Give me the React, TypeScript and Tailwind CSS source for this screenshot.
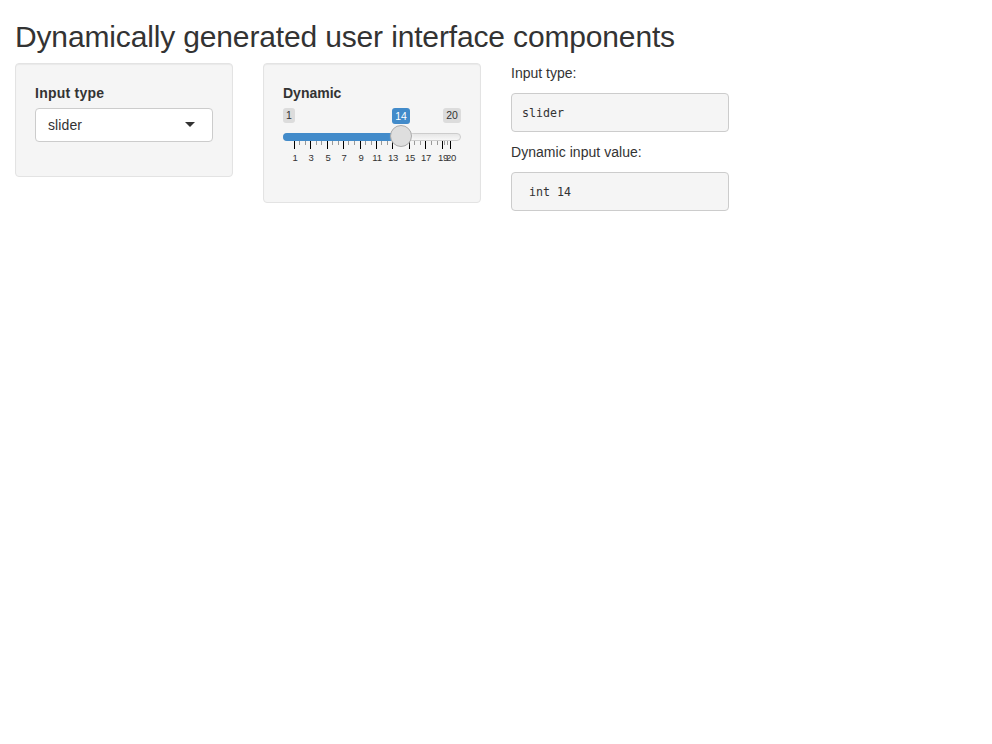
import React from "react";

// Tick offsets are in pixels from the left end of the slider track.
const majorTicks = [
  { x: 11, label: "1" },
  { x: 27, label: "3" },
  { x: 44, label: "5" },
  { x: 60, label: "7" },
  { x: 77, label: "9" },
  { x: 93, label: "11" },
  { x: 109, label: "13" },
  { x: 126, label: "15" },
  { x: 142, label: "17" },
  { x: 159, label: "19" },
  { x: 167, label: "20" },
];

const minorTicks = [16, 22, 33, 38, 49, 55, 65, 71, 82, 88, 98, 104, 115, 120, 131, 137, 148, 154, 161, 164];

function Well({ children, height }: { children: React.ReactNode; height: string }) {
  return (
    <div
      className={`w-[218px] rounded-[4px] border border-[#e3e3e3] bg-[#f5f5f5] p-[19px] shadow-[inset_0_1px_1px_rgba(0,0,0,0.05)] ${height}`}
    >
      {children}
    </div>
  );
}

function Slider() {
  return (
    <div className="relative mt-[5px] h-[60px] w-[178px] text-[#333]">
      <div className="flex justify-between text-[10.5px] leading-[15px]">
        <span className="w-3 rounded-[3px] bg-black/10 text-center">1</span>
        <span className="w-[18px] rounded-[3px] bg-black/10 text-center">20</span>
      </div>
      <span className="absolute left-[109px] top-0 w-[18px] rounded-[3px] bg-[#428bca] text-center text-[10.5px] leading-4 text-white">
        14
      </span>
      <div className="mt-[10px] h-2 overflow-hidden rounded-[8px] border border-[#ccc] bg-gradient-to-b from-[#e6e6e6] to-[#f7f7f7]" />
      <div className="absolute left-0 top-[25px] h-2 w-[118px] rounded-l-[8px] bg-[#428bca]" />
      {minorTicks.map((x) => (
        <i key={x} className="absolute top-[33px] h-1 w-px bg-[#999]" style={{ left: x }} />
      ))}
      {majorTicks.map(({ x, label }) => (
        <React.Fragment key={x}>
          <i className="absolute top-[33px] h-2 w-px bg-black" style={{ left: x }} />
          <span
            className="absolute top-[45px] w-5 text-center text-[9.5px] leading-[10px] tracking-[-0.2px]"
            style={{ left: x - 9 }}
          >
            {label}
          </span>
        </React.Fragment>
      ))}
      <div className="absolute left-[107px] top-[17px] size-[22px] rounded-full border border-[#ababab] bg-[#dedede] shadow-[1px_1px_3px_rgba(255,255,255,0.3)]" />
    </div>
  );
}

function Output({ children }: { children: string }) {
  return (
    <pre className="mt-[10px] mb-[10px] h-[39px] rounded-[4px] border border-[#ccc] bg-[#f5f5f5] px-[10px] py-[9.5px] font-['DejaVu_Sans_Mono',monospace] text-[11.63px] leading-[18px]">
      {children}
    </pre>
  );
}

export default function App() {
  return (
    <main className="min-h-screen bg-white px-[15px] pt-5 font-['Liberation_Sans',Arial,sans-serif] text-[14px] leading-5 text-[#333]">
      <h2 className="mb-[10px] text-[30px] font-normal leading-[33px] tracking-[-0.15px]">
        Dynamically generated user interface components
      </h2>
      <div className="flex items-start gap-[30px]">
        <Well height="h-[114px]">
          <label className="block font-bold tracking-[0.25px]">Input type</label>
          <div className="mt-[5px] flex h-[34px] w-[178px] items-center justify-between rounded-[4px] border border-[#ccc] bg-white pl-3 pr-[17px]">
            <span className="tracking-[0.1px]">slider</span>
            <i className="relative -top-px border-x-[5px] border-t-[5px] border-x-transparent border-t-[#333]" />
          </div>
        </Well>
        <Well height="h-[140px]">
          <label className="block font-bold">Dynamic</label>
          <Slider />
        </Well>
        <section className="w-[218px]">
          <p>Input type:</p>
          <Output>slider</Output>
          <p className="tracking-[0.04px]">Dynamic input value:</p>
          <Output>{" int 14"}</Output>
        </section>
      </div>
    </main>
  );
}
